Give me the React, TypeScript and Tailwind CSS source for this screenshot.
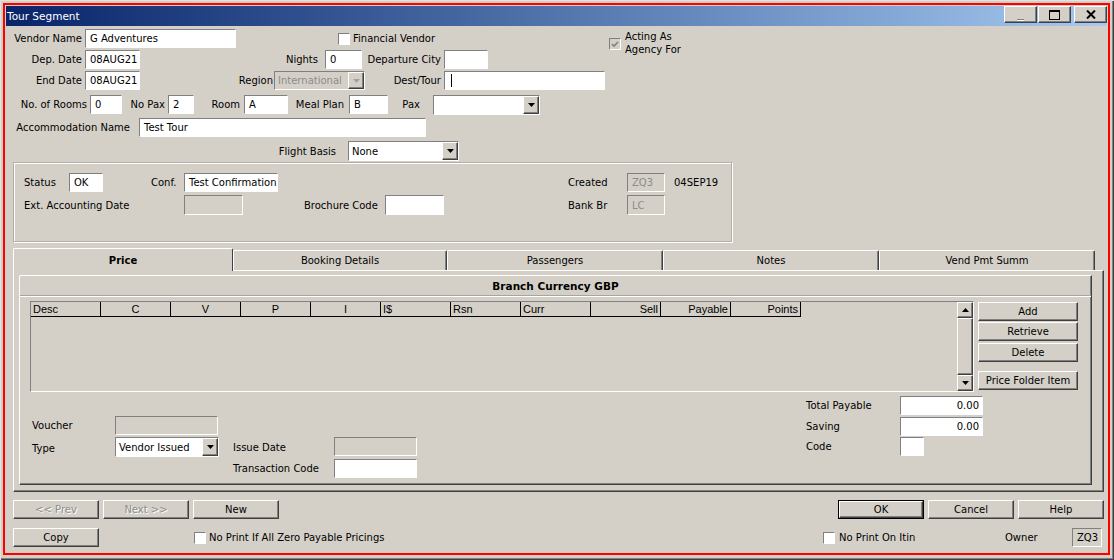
import React from "react";

const sunken =
  "border border-t-[#808080] border-l-[#808080] border-b-white border-r-white";
const raised =
  "border border-t-white border-l-white border-b-[#404040] border-r-[#404040] shadow-[inset_-1px_-1px_0_#808080]";

type EditProps = {
  className?: string;
  value?: string;
  disabled?: boolean;
  right?: boolean;
  caret?: boolean;
};

function Edit({ className = "", value = "", disabled, right, caret }: EditProps) {
  return (
    <div
      className={`${sunken} ${
        disabled ? "bg-[#d4d0c8] text-[#8c8c8c]" : "bg-white text-black"
      } flex shrink-0 items-center overflow-hidden whitespace-nowrap ${
        right ? "justify-end pr-[3px]" : "pl-[4px]"
      } ${className}`}
    >
      {caret && <span className="ml-[2px] w-px h-[13px] bg-black" />}
      <span className="pt-px">{value}</span>
    </div>
  );
}

function Label({
  className = "",
  right,
  children,
}: {
  className?: string;
  right?: boolean;
  children: React.ReactNode;
}) {
  return (
    <span
      className={`flex shrink-0 items-center whitespace-nowrap ${
        right ? "justify-end" : ""
      } ${className}`}
    >
      <span className="pt-px">{children}</span>
    </span>
  );
}

function Tri({ up, color = "#000" }: { up?: boolean; color?: string }) {
  return (
    <svg width="7" height="4" viewBox="0 0 7 4">
      <polygon points={up ? "3.5,0 7,4 0,4" : "0,0 7,0 3.5,4"} fill={color} />
    </svg>
  );
}

function Combo({
  className = "",
  value = "",
  disabled,
}: {
  className?: string;
  value?: string;
  disabled?: boolean;
}) {
  return (
    <div
      className={`${sunken} ${
        disabled ? "bg-[#d4d0c8] text-[#8c8c8c]" : "bg-white text-black"
      } flex shrink-0 ${className}`}
    >
      <span className="flex-1 flex items-center pl-[3px] pt-px overflow-hidden whitespace-nowrap">
        {value}
      </span>
      <span className={`${raised} bg-[#d4d0c8] w-[16px] flex items-center justify-center`}>
        <Tri color={disabled ? "#a0a0a0" : "#000"} />
      </span>
    </div>
  );
}

function Btn({
  className = "",
  children,
  disabled,
  def,
}: {
  className?: string;
  children: React.ReactNode;
  disabled?: boolean;
  def?: boolean;
}) {
  return (
    <div className={`${def ? "border border-black" : ""} flex shrink-0 ${className}`}>
      <div
        className={`${raised} flex-1 bg-[#d4d0c8] flex items-center justify-center pt-px whitespace-nowrap ${
          disabled ? "text-[#8c8c8c] [text-shadow:1px_1px_0_#fff]" : "text-black"
        }`}
      >
        {children}
      </div>
    </div>
  );
}

function Check({
  className = "",
  checked,
  disabled,
}: {
  className?: string;
  checked?: boolean;
  disabled?: boolean;
}) {
  return (
    <div
      className={`${sunken} w-[12px] h-[12px] shrink-0 ${
        disabled ? "bg-[#d4d0c8]" : "bg-white"
      } flex items-center justify-center ${className}`}
    >
      {checked && (
        <svg width="8" height="7" viewBox="0 0 8 7">
          <polyline
            points="1,3 3,5 7,1"
            fill="none"
            stroke={disabled ? "#808080" : "#000"}
            strokeWidth="1.6"
          />
        </svg>
      )}
    </div>
  );
}

const cols: [string, string][] = [
  ["Desc", "justify-start"],
  ["C", "justify-center"],
  ["V", "justify-center"],
  ["P", "justify-center"],
  ["I", "justify-center"],
  ["I$", "justify-start"],
  ["Rsn", "justify-start"],
  ["Curr", "justify-start"],
  ["Sell", "justify-end"],
  ["Payable", "justify-end"],
  ["Points", "justify-end"],
];

const tabs = [
  { name: "Booking Details", w: "w-[214px]" },
  { name: "Passengers", w: "w-[216px]" },
  { name: "Notes", w: "w-[216px]" },
  { name: "Vend Pmt Summ", w: "w-[216px]" },
];

export default function App() {
  return (
    <div className="w-[1114px] h-[560px] bg-[#d4d0c8] pt-[3px] pl-[3px] pr-[4px] pb-[5px] shadow-[inset_1px_1px_0_#e4e2dd,inset_-1px_-1px_0_#404040,inset_-2px_-2px_0_#808080] font-['DejaVu_Sans',sans-serif] text-[10px] leading-[12px] text-black overflow-hidden">
      <div className="h-full border-2 border-[#ff0000] p-px flex flex-col">
        {/* title bar */}
        <div className="h-[20px] shrink-0 flex bg-linear-to-r from-[#0a246a] to-[#a6caf0]">
          <span className="pl-[1px] flex items-center text-white text-[10.5px]">
            Tour Segment
          </span>
          <div className="ml-auto flex self-start">
            <div className={`${raised} bg-[#d4d0c8] w-[33px] h-[17px] flex items-end justify-center pb-[2px]`}>
              <div className="w-[7px] h-px bg-[#808080] shadow-[0_1px_0_#fff]" />
            </div>
            <div className={`${raised} bg-[#d4d0c8] ml-px w-[33px] h-[17px] flex items-center justify-center`}>
              <svg width="11" height="10" viewBox="0 0 11 10">
                <rect x="0.5" y="0.5" width="10" height="9" fill="none" stroke="#000" />
                <rect x="0" y="0" width="11" height="2" fill="#000" />
              </svg>
            </div>
            <div className={`${raised} bg-[#d4d0c8] ml-[3px] w-[33px] h-[17px] flex items-center justify-center`}>
              <svg width="10" height="9" viewBox="0 0 10 9">
                <path d="M1 0.5L9 8.5M9 0.5L1 8.5" stroke="#000" strokeWidth="2" />
              </svg>
            </div>
          </div>
        </div>

        {/* body */}
        <div className="flex-1 flex flex-col">
          <div className="mt-[3px] h-[19px] flex">
            <Label right className="w-[76px]">Vendor Name</Label>
            <Edit className="ml-[3px] w-[151px]" value="G Adventures" />
            <Check className="ml-[102px] self-center" />
            <Label className="ml-[3px] w-[256px]">Financial Vendor</Label>
            <Check className="self-start mt-[9px]" checked disabled />
            <div className="ml-[4px] self-start mt-[1px] leading-[13px] whitespace-nowrap">
              <div>Acting As</div>
              <div>Agency For</div>
            </div>
          </div>

          <div className="mt-[2px] h-[19px] flex">
            <Label right className="w-[76px]">Dep. Date</Label>
            <Edit className="ml-[3px] w-[55px]" value="08AUG21" />
            <Label right className="w-[178px]">Nights</Label>
            <Edit className="ml-[7px] w-[37px]" value="0" />
            <Label right className="w-[79px]">Departure City</Label>
            <Edit className="ml-[3px] w-[44px]" />
          </div>

          <div className="mt-[2px] h-[19px] flex">
            <Label right className="w-[76px]">End Date</Label>
            <Edit className="ml-[3px] w-[55px]" value="08AUG21" />
            <Label right className="w-[133px]">Region</Label>
            <Combo className="ml-[1px] w-[91px]" value="International" disabled />
            <Label right className="w-[76px]">Dest/Tour</Label>
            <Edit className="ml-[3px] w-[161px]" caret />
          </div>

          <div className="mt-[5px] h-[19px] flex">
            <Label right className="w-[81px]">No. of Rooms</Label>
            <Edit className="ml-[3px] w-[32px]" value="0" />
            <Label right className="w-[43px]">No Pax</Label>
            <Edit className="ml-[3px] w-[26px]" value="2" />
            <Label right className="w-[46px]">Room</Label>
            <Edit className="ml-[4px] w-[44px]" value="A" />
            <Label right className="w-[56px]">Meal Plan</Label>
            <Edit className="ml-[5px] w-[39px]" value="B" />
            <Label right className="w-[32px]">Pax</Label>
            <Combo className="ml-[13px] w-[107px] h-[20px]" />
          </div>

          <div className="mt-[4px] h-[19px] flex">
            <Label right className="w-[124px]">Accommodation Name</Label>
            <Edit className="ml-[9px] w-[287px]" value="Test Tour" />
          </div>

          <div className="mt-[4px] h-[20px] flex">
            <Label right className="w-[330px]">Flight Basis</Label>
            <Combo className="ml-[12px] w-[111px]" value="None" />
          </div>

          {/* group box */}
          <div className="mt-[1px] ml-[7px] w-[719px] h-[80px] shrink-0 border border-[#b3afa8] shadow-[1px_1px_0_#fff,inset_1px_1px_0_#fff]">
            <div className="mt-[10px] h-[19px] flex">
              <Label className="ml-[10px] w-[45px]">Status</Label>
              <Edit className="w-[34px]" value="OK" />
              <Label className="ml-[48px] w-[33px]">Conf.</Label>
              <Edit className="w-[94px]" value="Test Confirmation" />
              <Label className="ml-[290px] w-[59px]">Created</Label>
              <Edit className="w-[38px]" value="ZQ3" disabled />
              <Label className="ml-[9px]">04SEP19</Label>
            </div>
            <div className="mt-[3px] h-[20px] flex">
              <Label className="ml-[10px] w-[160px]">Ext. Accounting Date</Label>
              <Edit className="w-[59px]" disabled />
              <Label className="ml-[61px] w-[81px]">Brochure Code</Label>
              <Edit className="w-[59px]" />
              <Label className="ml-[124px] w-[59px]">Bank Br</Label>
              <Edit className="w-[38px]" value="LC" disabled />
            </div>
          </div>

          {/* tabs */}
          <div className="mt-[6px] ml-[7px] h-[22px] shrink-0 flex items-end">
            <div className="relative z-10 -mb-px w-[220px] h-[23px] pt-px bg-[#d4d0c8] border-t border-l border-r border-t-white border-l-white border-r-[#404040] rounded-t-[2px] flex items-center justify-center font-bold">
              Price
            </div>
            {tabs.map((t) => (
              <div
                key={t.name}
                className={`${t.w} h-[20px] pt-px border-t border-l border-r border-t-white border-l-white border-r-[#404040] rounded-t-[2px] shadow-[inset_-1px_0_0_#808080] flex items-center justify-center`}
              >
                {t.name}
              </div>
            ))}
          </div>

          {/* tab panel */}
          <div className="ml-[7px] w-[1091px] h-[222px] shrink-0 border border-t-white border-l-white border-b-[#404040] border-r-[#404040] shadow-[inset_-1px_-1px_0_#808080]">
            <div className="mt-[4px] ml-[5px] w-[1073px] h-[210px] border border-t-white border-l-white border-b-[#404040] border-r-[#404040] rounded-tl-[2px] shadow-[inset_-1px_-1px_0_#808080] flex flex-col">
              <div className="h-[19px] pt-px flex items-center justify-center font-bold text-[10.5px]">
                Branch Currency GBP
              </div>
              <div className="h-[2px] border-t border-b border-t-[#a9a59e] border-b-white" />

              <div className="mt-[4px] flex items-start">
                <div className={`ml-[10px] w-[944px] h-[91px] ${sunken} flex`}>
                  <div className="flex-1">
                    <div className="flex h-[15px] w-[770px] border-b border-black font-['Liberation_Sans',Arial,sans-serif] text-[11px]">
                      {cols.map(([c, a]) => (
                        <div
                          key={c}
                          className={`w-[70px] h-full border-r border-black flex items-center px-[2px] ${a}`}
                        >
                          {c}
                        </div>
                      ))}
                    </div>
                  </div>
                  <div className="w-[16px] flex flex-col">
                    <div className={`${raised} bg-[#d4d0c8] h-[16px] flex items-center justify-center`}>
                      <Tri up />
                    </div>
                    <div className={`${raised} bg-[#d4d0c8] flex-1`} />
                    <div className={`${raised} bg-[#d4d0c8] h-[16px] flex items-center justify-center`}>
                      <Tri />
                    </div>
                  </div>
                </div>
                <div className="ml-[4px] mt-[1px] w-[100px] flex flex-col">
                  <Btn className="h-[19px]">Add</Btn>
                  <Btn className="mt-[1px] h-[19px]">Retrieve</Btn>
                  <Btn className="mt-[2px] h-[19px]">Delete</Btn>
                  <Btn className="mt-[9px] h-[19px]">Price Folder Item</Btn>
                </div>
              </div>

              <div className="flex items-start">
                <div className="ml-[12px] mt-[24px] flex flex-col">
                  <div className="h-[19px] flex">
                    <Label className="w-[83px]">Voucher</Label>
                    <Edit className="w-[103px]" disabled />
                  </div>
                  <div className="mt-[2px] h-[20px] flex">
                    <Label className="w-[83px] pt-[3px]">Type</Label>
                    <Combo className="w-[104px]" value="Vendor Issued" />
                    <Label className="ml-[14px] w-[101px]">Issue Date</Label>
                    <Edit className="w-[83px] h-[19px]" disabled />
                  </div>
                  <div className="mt-[2px] h-[19px] flex">
                    <Label className="ml-[201px] w-[101px]">Transaction Code</Label>
                    <Edit className="w-[83px]" />
                  </div>
                </div>
                <div className="ml-[389px] mt-[4px] flex flex-col">
                  <div className="h-[19px] flex">
                    <Label className="w-[94px]">Total Payable</Label>
                    <Edit className="w-[83px]" value="0.00" right />
                  </div>
                  <div className="mt-[2px] h-[19px] flex">
                    <Label className="w-[94px]">Saving</Label>
                    <Edit className="w-[83px]" value="0.00" right />
                  </div>
                  <div className="mt-[1px] h-[19px] flex">
                    <Label className="w-[94px]">Code</Label>
                    <Edit className="w-[24px]" />
                  </div>
                </div>
              </div>
            </div>
          </div>

          {/* bottom buttons */}
          <div className="mt-[8px] h-[19px] flex">
            <Btn className="ml-[7px] w-[86px]" disabled>
              {"<< Prev"}
            </Btn>
            <Btn className="ml-[4px] w-[86px]" disabled>
              {"Next >>"}
            </Btn>
            <Btn className="ml-[4px] w-[86px]">New</Btn>
            <Btn className="ml-[559px] w-[86px]" def>
              OK
            </Btn>
            <Btn className="ml-[4px] w-[86px]">Cancel</Btn>
            <Btn className="ml-[4px] w-[86px]">Help</Btn>
          </div>

          <div className="mt-[9px] h-[19px] flex">
            <Btn className="ml-[7px] w-[86px]">Copy</Btn>
            <Check className="ml-[95px] self-center" />
            <Label className="ml-[3px] w-[614px]">No Print If All Zero Payable Pricings</Label>
            <Check className="self-center" />
            <Label className="ml-[4px] w-[166px]">No Print On Itin</Label>
            <Label className="w-[67px]">Owner</Label>
            <Edit className="w-[30px] !text-black" value="ZQ3" disabled />
          </div>
        </div>
      </div>
    </div>
  );
}
